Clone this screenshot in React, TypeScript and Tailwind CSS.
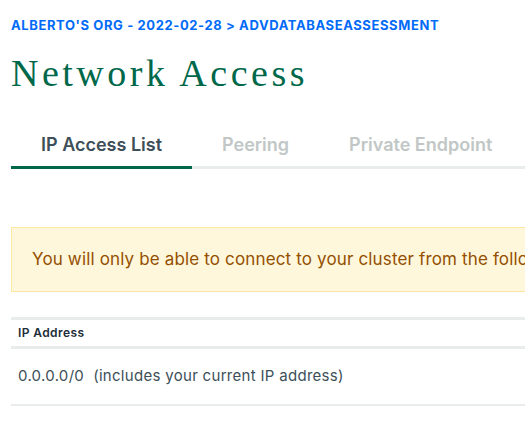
import React from 'react';

const tabs = ['IP Access List', 'Peering', 'Private Endpoint'];

const App: React.FC = () => {
  const active = 0;

  return (
    <div className="w-[525px] h-[442px] overflow-hidden bg-white font-['Inter',sans-serif]">
      <div className="pl-[11px] w-[560px]">
        <div className="pt-[17px] text-[13px] leading-[16px] font-bold uppercase text-[#016bf8] tracking-[0.6px] whitespace-nowrap">
          Alberto's Org - 2022-02-28 &gt; AdvDatabaseAssessment
        </div>

        <h1 className="mt-[18px] text-[38px] leading-[44px] text-[#00684a] font-['Liberation_Serif',serif] tracking-[3.5px] whitespace-nowrap">
          Network Access
        </h1>

        <div className="mt-[38px] flex border-b-[3px] border-[#e8edeb]">
          {tabs.map((tab, i) => (
            <div
              key={tab}
              className={
                i === active
                  ? 'px-[30px] pb-[9px] -mb-[3px] border-b-[3px] border-[#00684a] text-[18px] leading-[24px] font-semibold text-[#3d4f58] whitespace-nowrap'
                  : 'px-[30px] pb-[9px] text-[18px] leading-[24px] font-semibold text-[#c1c7c6] whitespace-nowrap'
              }
            >
              {tab}
            </div>
          ))}
        </div>

        <div className="mt-[58px] h-[65px] flex items-center pl-[20px] bg-[#fef7db] border border-[#fee8a1] text-[17px] text-[#944f01] tracking-[0.15px] whitespace-nowrap">
          You will only be able to connect to your cluster from the following IP addresses:
        </div>

        <div className="mt-[25px] border-t-[3px] border-[#e8edeb]">
          <div className="h-[29px] flex items-center pl-[7px] text-[12px] font-semibold text-[#1c2d38] tracking-[0.4px] border-b-[3px] border-[#e8edeb]">
            IP Address
          </div>
          <div className="h-[57px] flex items-center pl-[7px] text-[15px] text-[#3d4f58] tracking-[0.3px] border-b-2 border-[#e8edeb] whitespace-pre">
            {'0.0.0.0/0  (includes your current IP address)'}
          </div>
        </div>
      </div>
    </div>
  );
};

export default App;
